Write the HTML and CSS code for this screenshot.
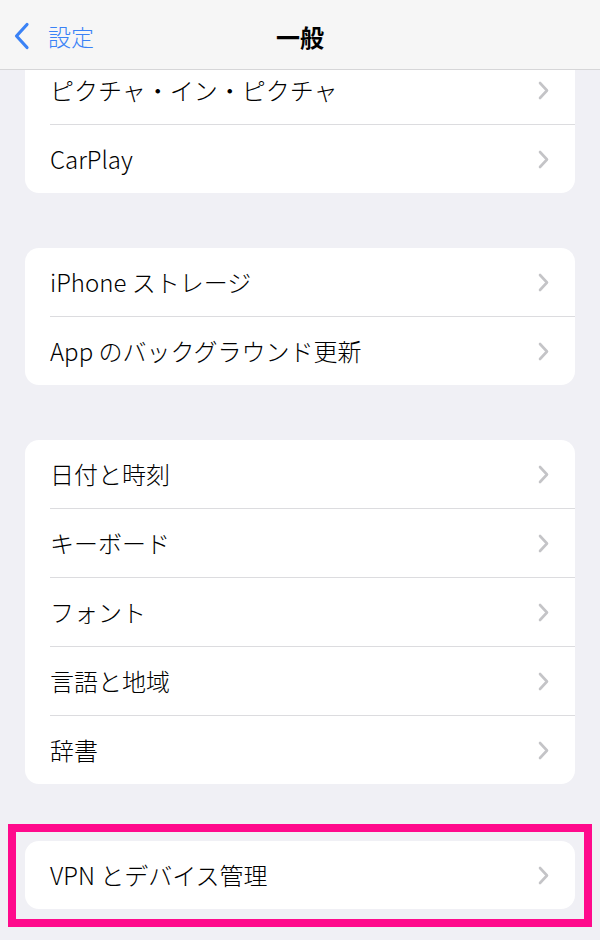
FILE: index.html
```html
<!DOCTYPE html>
<html lang="ja">
<head>
    <meta charset="UTF-8">
    <meta name="viewport" content="width=device-width, initial-scale=1.0">
    <title>一般</title>
    <link rel="stylesheet" href="styles.css">
</head>
<body>
    <!-- ナビゲーションバー -->
    <header class="nav-bar">
        <a class="nav-back" href="#">
            <svg class="back-icon" width="16" height="28" viewBox="0 0 16 28">
                <path d="M13 2.5 L2.5 14 L13 25.5" fill="none" stroke="#3a82f6" stroke-width="3.2" stroke-linecap="round" stroke-linejoin="round"/>
            </svg>
            <span>設定</span>
        </a>
        <h1 class="nav-title">一般</h1>
    </header>

    <main class="settings">
        <section class="group group-first">
            <div class="row"><div class="row-inner"><span class="label">ピクチャ・イン・ピクチャ</span><span class="chevron"></span></div></div>
            <div class="row"><div class="row-inner"><span class="label">CarPlay</span><span class="chevron"></span></div></div>
        </section>

        <section class="group">
            <div class="row"><div class="row-inner"><span class="label">iPhone ストレージ</span><span class="chevron"></span></div></div>
            <div class="row"><div class="row-inner"><span class="label">App のバックグラウンド更新</span><span class="chevron"></span></div></div>
        </section>

        <section class="group">
            <div class="row"><div class="row-inner"><span class="label">日付と時刻</span><span class="chevron"></span></div></div>
            <div class="row"><div class="row-inner"><span class="label">キーボード</span><span class="chevron"></span></div></div>
            <div class="row"><div class="row-inner"><span class="label">フォント</span><span class="chevron"></span></div></div>
            <div class="row"><div class="row-inner"><span class="label">言語と地域</span><span class="chevron"></span></div></div>
            <div class="row"><div class="row-inner"><span class="label">辞書</span><span class="chevron"></span></div></div>
        </section>

        <!-- 強調枠 -->
        <div class="highlight">
            <section class="group">
                <div class="row"><div class="row-inner"><span class="label">VPN とデバイス管理</span><span class="chevron"></span></div></div>
            </section>
        </div>
    </main>

    <script>
        // シェブロンを差し込む
        document.querySelectorAll('.chevron').forEach(el => {
            el.innerHTML = '<svg width="11" height="19" viewBox="0 0 11 19"><path d="M2 2 L9 9.5 L2 17" fill="none" stroke="#c4c4c7" stroke-width="2.6" stroke-linecap="round" stroke-linejoin="round"/></svg>';
        });
    </script>
</body>
</html>
```

FILE: styles.css
```css
body {
    margin: 0;
    background-color: #f0f0f5;
    font-family: "Noto Sans CJK JP", "Noto Sans", sans-serif;
    color: #000;
    overflow: hidden;
}

.nav-bar {
    position: sticky;
    top: 0;
    z-index: 1;
    height: 69px;
    display: flex;
    align-items: center;
    justify-content: center;
    background-color: #f6f6f6;
    border-bottom: 1px solid #d6d6d8;
}

.nav-back {
    position: absolute;
    left: 14px;
    top: 22px;
    display: flex;
    align-items: center;
    gap: 18px;
    color: #3a82f6;
    text-decoration: none;
    font-size: 23px;
    font-weight: 300;
    line-height: 28px;
}

.back-icon {
    display: block;
}

.nav-title {
    margin: 0;
    font-size: 24px;
    font-weight: 700;
    line-height: 28px;
    margin-top: 4px;
}

.settings {
    padding: 0 0 40px;
}

.group {
    margin: 55px 25px 0;
    background-color: #fff;
    border-radius: 14px;
    overflow: hidden;
}

.group-first {
    margin-top: -14px;
}

.row {
    padding-left: 25px;
    height: 69px;
    display: flex;
}

.row-inner {
    flex: 1;
    display: flex;
    align-items: center;
    justify-content: space-between;
    padding-right: 26px;
    border-bottom: 1px solid #dcdcdf;
}

.row:last-child {
    height: 68px;
}

.row:last-child .row-inner {
    border-bottom: none;
}

.label {
    font-size: 24px;
    font-weight: 300;
    line-height: 30px;
}

.chevron {
    display: flex;
}

.highlight {
    margin: 40px 8px 0;
    padding: 9px 9px 10px;
    border: 8px solid #ff0a8c;
}

.highlight .group {
    margin: 0;
}
```
